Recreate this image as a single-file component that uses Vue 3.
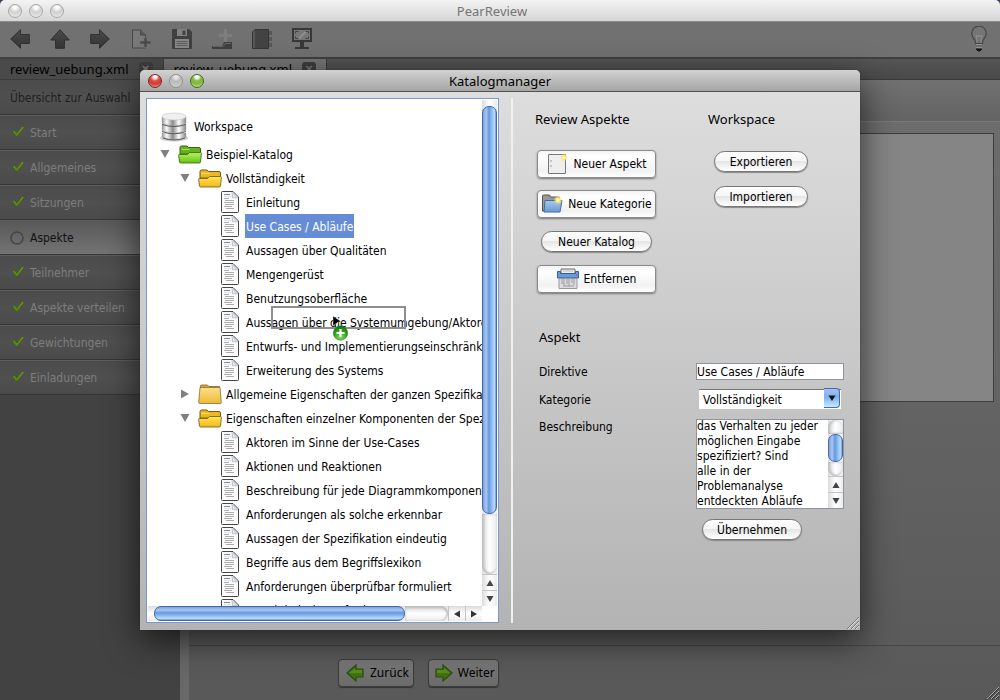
<script setup>
import { ref } from 'vue'

const steps = [
  { label: 'Start', done: true },
  { label: 'Allgemeines', done: true },
  { label: 'Sitzungen', done: true },
  { label: 'Aspekte', done: false },
  { label: 'Teilnehmer', done: true },
  { label: 'Aspekte verteilen', done: true },
  { label: 'Gewichtungen', done: true },
  { label: 'Einladungen', done: true }
]

const rows = [
  { kind: 'catalog', level: 1, open: true, label: 'Beispiel-Katalog' },
  { kind: 'folder', level: 2, open: true, label: 'Vollständigkeit' },
  { kind: 'doc', level: 3, label: 'Einleitung' },
  { kind: 'doc', level: 3, label: 'Use Cases / Abläufe', selected: true },
  { kind: 'doc', level: 3, label: 'Aussagen über Qualitäten' },
  { kind: 'doc', level: 3, label: 'Mengengerüst' },
  { kind: 'doc', level: 3, label: 'Benutzungsoberfläche' },
  { kind: 'doc', level: 3, label: 'Aussagen über die Systemumgebung/Aktoren' },
  { kind: 'doc', level: 3, label: 'Entwurfs- und Implementierungseinschränkungen' },
  { kind: 'doc', level: 3, label: 'Erweiterung des Systems' },
  { kind: 'closed', level: 2, open: false, label: 'Allgemeine Eigenschaften der ganzen Spezifikation' },
  { kind: 'folder', level: 2, open: true, label: 'Eigenschaften einzelner Komponenten der Spezifikation' },
  { kind: 'doc', level: 3, label: 'Aktoren im Sinne der Use-Cases' },
  { kind: 'doc', level: 3, label: 'Aktionen und Reaktionen' },
  { kind: 'doc', level: 3, label: 'Beschreibung für jede Diagrammkomponente' },
  { kind: 'doc', level: 3, label: 'Anforderungen als solche erkennbar' },
  { kind: 'doc', level: 3, label: 'Aussagen der Spezifikation eindeutig' },
  { kind: 'doc', level: 3, label: 'Begriffe aus dem Begriffslexikon' },
  { kind: 'doc', level: 3, label: 'Anforderungen überprüfbar formuliert' },
  { kind: 'doc', level: 3, label: 'Korrektheit der Anforderungen' }
]

const directive = ref('Use Cases / Abläufe')
const category = ref('Vollständigkeit')
const description = ref('das Verhalten zu jeder\nmöglichen Eingabe\nspezifiziert? Sind\nalle in der\nProblemanalyse\nentdeckten Abläufe')
</script>

<template>
  <div class="desktop">
    <svg class="defs" aria-hidden="true">
      <defs>
        <linearGradient id="gGreen" x1="0" y1="0" x2="0" y2="1"><stop offset="0" stop-color="#b9f06a" /><stop offset="1" stop-color="#63c40e" /></linearGradient>
        <linearGradient id="gYellow" x1="0" y1="0" x2="0" y2="1"><stop offset="0" stop-color="#ffe650" /><stop offset="1" stop-color="#f6b51e" /></linearGradient>
        <linearGradient id="gTan" x1="0" y1="0" x2="0" y2="1"><stop offset="0" stop-color="#fbe08a" /><stop offset="1" stop-color="#eeba38" /></linearGradient>
        <linearGradient id="gBlue" x1="0" y1="0" x2="0" y2="1"><stop offset="0" stop-color="#a9c8ea" /><stop offset="1" stop-color="#6b9ad2" /></linearGradient>
        <linearGradient id="gMetal" x1="0" y1="0" x2="1" y2="0"><stop offset="0" stop-color="#999" /><stop offset=".2" stop-color="#fafafa" /><stop offset=".45" stop-color="#8a8a8a" /><stop offset=".7" stop-color="#fff" /><stop offset="1" stop-color="#888" /></linearGradient>
        <linearGradient id="gDark" x1="0" y1="0" x2="0" y2="1"><stop offset="0" stop-color="#4a4a4a" /><stop offset="1" stop-color="#343434" /></linearGradient>
        <linearGradient id="gCheck" x1="0" y1="0" x2="0" y2="1"><stop offset="0" stop-color="#7ba51f" /><stop offset="1" stop-color="#4d7c10" /></linearGradient>
        <radialGradient id="gPlus" cx=".5" cy=".8" r=".8"><stop offset="0" stop-color="#7fe05c" /><stop offset=".6" stop-color="#2c9e1c" /><stop offset="1" stop-color="#156a10" /></radialGradient>
        <radialGradient id="gSun"><stop offset="0" stop-color="#fffef0" /><stop offset=".4" stop-color="#ffee70" /><stop offset="1" stop-color="#ffe650" stop-opacity="0" /></radialGradient>
      </defs>
    </svg>

    <main class="window">
      <header class="titlebar main-bar">
        <div class="lights"><button class="light" aria-label="Schließen"></button><button class="light" aria-label="Minimieren"></button><button class="light" aria-label="Zoomen"></button></div>
        <span class="title faded">PearReview</span>
      </header>

      <nav class="toolbar">
        <button aria-label="Zurück"><svg width="20" height="20" viewBox="0 0 20 20"><path d="M.7 10 10.500.7v4.800h8.800v9h-8.800v4.800z" fill="url(#gDark)" stroke="#303030" /></svg></button>
        <button aria-label="Nach oben"><svg width="20" height="20" viewBox="0 0 20 20"><path d="M10 .7 19.300 11h-4.800v8.300h-9V11H.7z" fill="url(#gDark)" stroke="#303030" /></svg></button>
        <button aria-label="Vor"><svg width="20" height="20" viewBox="0 0 20 20"><path d="M19.300 10 9.500.7v4.800H.7v9h8.800v4.800z" fill="url(#gDark)" stroke="#303030" /></svg></button>
        <button class="wide-tool" aria-label="Neue Datei"><svg width="20" height="20" viewBox="0 0 20 20"><path d="M1.500 1h8l5 5v13h-13z" fill="#797979" stroke="#484848" /><path d="M9.500 1v5h5" fill="#5a5a5a" stroke="#484848" /><path d="M13 8.500h3v3.500h4v3h-4v3.500h-3V15H9v-3h4z" fill="#4a4a4a" stroke="#777" stroke-width=".6" /></svg></button>
        <button aria-label="Speichern"><svg width="20" height="20" viewBox="0 0 20 20"><path d="M0 1q0-1 1-1h16l3 3v16q0 1-1 1H1q-1 0-1-1z" fill="#404040" /><path d="M5 0h10v7H5z" fill="#828282" /><path d="M10.500 1.500h3V6h-3z" fill="#444" /><path d="M3 10h14v9H3z" fill="#888" /><path d="M4.500 12.500h11m-11 2h11m-11 2h11" stroke="#5c5c5c" /></svg></button>
        <button aria-label="Hinzufügen"><svg width="20" height="20" viewBox="0 0 20 20"><path d="M12 0h3v5h5v3h-5v5h-3V8H7V5h5z" fill="#7e7e7e" /><path d="M0 17h10l2-4h8v7H0z" fill="#3f3f3f" /><path d="M1 17.500h10l2-3h6" fill="none" stroke="#666" /></svg></button>
        <button aria-label="Katalog"><svg width="20" height="20" viewBox="0 0 20 20"><path d="M3 .5h13.500v19H.5V3z" fill="#434343" stroke="#353535" /><path d="M1 3v16h2V1z" fill="#585858" /><path d="M17 2h3v4h-3zm0 6h3v4h-3zm0 6h3v4h-3z" fill="#575757" /></svg></button>
        <button aria-label="Präsentation"><svg width="20" height="22" viewBox="0 0 20 22"><path d="M0 0h20v14H0z" fill="#383838" /><path d="M2 2h16v10H2z" fill="#777" /><path d="m5 11 8-8h3l-8 8z" fill="#8e8e8e" /><path d="M3.500 5.500v-2h3m7 0h3v2m0 3v2h-3m-7 0h-3v-2" stroke="#444" fill="none" /><path d="M8 14h4v5h5v2H3v-2h5z" fill="#383838" /></svg></button>
        <button class="bulb" aria-label="Tipp"><svg width="16" height="26" viewBox="0 0 16 26"><path d="M4.500 17.500Q4.500 14 2.500 12A7.200 7.200 0 1 1 13.500 12q-2 2-2 5.500z" fill="#757575" stroke="#484848" stroke-width="1.300" /><path d="m6 17-1-8 2 2 1-2 1 2 2-2-1 8" fill="none" stroke="#8c8c8c" /><path d="M5 18h6v4H5z" fill="#929292" /><path d="M5 20h6" stroke="#444" /><path d="M5 23h6l-2 2H7z" fill="#161616" stroke="#161616" /></svg></button>
      </nav>

      <div class="tabs">
        <div class="tab"><a href="#a">review_uebung.xml</a><button class="close" aria-label="Tab schließen">×</button></div>
        <div class="tab current"><a href="#b">review_uebung.xml</a><button class="close" aria-label="Tab schließen">×</button></div>
      </div>

      <div class="workarea">
        <aside class="sidebar">
          <h2>Übersicht zur Auswahl</h2>
          <ul>
            <li v-for="s in steps" :key="s.label" :class="{ active: !s.done }">
              <svg v-if="s.done" width="14" height="18" viewBox="0 0 14 18"><path d="m2.500 7.500 2-1.200 2.300 2.800L12.500 2.500l1.500.8L7.500 12.500H6z" fill="url(#gCheck)" stroke="#3c5a12" stroke-width=".7" /></svg>
              <svg v-else width="14" height="14" viewBox="0 0 14 14"><circle cx="7" cy="7" r="6" fill="none" stroke="#464646" stroke-width="1.600" /></svg>
              <a href="#step">{{ s.label }}</a>
            </li>
          </ul>
        </aside>
        <section class="content">
          <div class="banner"></div>
          <div class="sheet"></div>
          <footer class="wizard">
            <button><svg width="18" height="18" viewBox="0 0 18 18"><path d="M1 9 10 1v4h7v8h-7v4z" fill="#42720f" stroke="#2b4e09" stroke-width="1.200" /><path d="m3 9 6-5v2h7v3z" fill="#5c8a20" /></svg>Zurück</button>
            <button><svg width="18" height="18" viewBox="0 0 18 18"><path d="M17 9 8 1v4H1v8h7v4z" fill="#42720f" stroke="#2b4e09" stroke-width="1.200" /><path d="M15 9 9 4v2H2v3z" fill="#5c8a20" /></svg>Weiter</button>
          </footer>
        </section>
      </div>
      <svg class="grip" width="12" height="12" viewBox="0 0 12 12"><path d="M0 12 12 0M4 12l8-8M8 12l4-4" stroke="#aaa" /><path d="M1 12 12 1M5 12l7-7M9 12l3-3" stroke="#333" /></svg>
    </main>

    <div class="overlay">
      <section class="dialog" role="dialog" aria-label="Katalogmanager">
        <header class="titlebar dialog-bar">
          <div class="lights"><button class="light red" aria-label="Schließen"></button><button class="light gray" aria-label="Minimieren"></button><button class="light green" aria-label="Zoomen"></button></div>
          <span class="title">Katalogmanager</span>
        </header>

        <div class="dialog-body">
          <div class="tree">
            <div class="view">
              <div class="root">
                <svg width="28" height="30" viewBox="0 0 28 30"><ellipse cx="14" cy="26" rx="14" ry="3.500" fill="#aaa" opacity=".6" /><g stroke="#999" stroke-width=".4"><path d="M2 21v4q12 5 24 0v-4z" fill="url(#gMetal)" /><path d="M2 13v5.500q12 5 24 0V13z" fill="url(#gMetal)" /><path d="M2 5v6.500q12 4.500 24 0V5z" fill="url(#gMetal)" /></g><path d="M2 12.300q12 4.500 24 0M2 19.500q12 4.500 24 0M3 26q11 4 22 0" stroke="#5c5c5c" stroke-width="1" fill="none" /><ellipse cx="14" cy="4.500" rx="12" ry="3.500" fill="#efefef" stroke="#c4c4c4" stroke-width=".6" /></svg>
                <span>Workspace</span>
              </div>
              <ul>
                <li v-for="r in rows" :key="r.label" :class="'l' + r.level">
                  <button v-if="r.kind !== 'doc'" class="twist" :aria-label="r.label">
                    <svg width="10" height="10" viewBox="0 0 10 10"><path :d="r.open ? 'M.5 1h9L5 9z' : 'M1 .5v9L9 5z'" fill="#808080" /></svg>
                  </button>
                  <svg v-if="r.kind === 'catalog' || r.kind === 'folder'" class="icon" width="24" height="19" viewBox="0 0 24 19" :stroke="r.kind === 'catalog' ? '#3f5f16' : '#705818'">
                    <path d="M2 16V2.500Q2 1 3.500 1H9l1.500 1.500H21q1.500 0 1.500 1.500v5H2z" :fill="r.kind === 'catalog' ? '#62b41a' : '#f0b820'" />
                    <path d="M.6 10.500Q.5 9.500 1.500 9.500h8l2-2H22.500q1 0 .9 1L22.500 17q-.2 1-1.200 1H2.700q-1 0-1.200-1z" :fill="r.kind === 'catalog' ? 'url(#gGreen)' : 'url(#gYellow)'" stroke-width=".8" />
                    <path d="M3.500 4.500h8M12.500 8.700h9.500" :stroke="r.kind === 'catalog' ? '#a8e25e' : '#ffe36a'" />
                  </svg>
                  <svg v-else-if="r.kind === 'closed'" class="icon" width="24" height="20" viewBox="0 0 24 20"><path d="M2.500 17V2Q2.500 1 3.500 1h6L11 2.500h10.500v14" fill="#dba82c" stroke="#80632a" stroke-width=".8" /><path d="M2 3.500H22L23.300 18.500q0 1-1 1H1.700q-1 0-1-1z" fill="url(#gTan)" stroke="#8a6c30" stroke-width=".8" /></svg>
                  <svg v-else class="doc" width="18" height="22" viewBox="0 0 18 22">
                    <path d="M1.500.5H12L17.500 6v14.500q0 1-1 1h-15q-1 0-1-1v-19q0-1 1-1z" fill="#fbfbfb" stroke="#444" />
                    <path d="M11 1.500 16.500 7 11.500 6.500z" fill="#dfe7f3" stroke="#9aa6b8" stroke-width=".6" />
                    <path d="M3 3.500h6" stroke="#7f8a99" /><path d="M3 5.500h7" stroke="#dbe3ee" /><path d="M3 7.500h5M4 9.500h9M3 11.500h10M4 13.500h9M3 15.500h8M5 17.500h8" stroke="#adadad" />
                  </svg>
                  <span :class="{ selected: r.selected }">{{ r.label }}</span>
                </li>
              </ul>
              <div class="dragbox"></div>
              <svg class="pointer" width="18" height="28" viewBox="0 0 18 28"><path d="M1 0 9 5.500 5.500 6.500 1 10z" fill="#000" stroke="#fff" stroke-width=".4" /><circle cx="8.500" cy="17" r="7.200" fill="url(#gPlus)" stroke="#277d1c" stroke-width=".6" /><path d="M8.500 13v8m-4-4h8" stroke="#fff" stroke-width="2.200" /></svg>
            </div>
            <div class="vbar">
              <div class="thumb"></div><div class="track"></div>
              <button aria-label="Nach oben"><svg width="8" height="8"><path d="M4 1 7.500 7h-7z" fill="#444" /></svg></button>
              <button aria-label="Nach unten"><svg width="8" height="8"><path d="M4 7 7.500 1h-7z" fill="#444" /></svg></button>
            </div>
            <div class="hbar">
              <div class="thumb"></div><div class="track"></div>
              <button aria-label="Nach links"><svg width="8" height="8"><path d="M1 4 7 .5v7z" fill="#333" /></svg></button>
              <button aria-label="Nach rechts"><svg width="8" height="8"><path d="M7 4 1 .5v7z" fill="#333" /></svg></button>
            </div>
          </div>

          <div class="panel">
            <div class="actions">
              <div class="col first">
                <h3>Review Aspekte</h3>
                <button class="square"><svg width="22" height="22" viewBox="0 0 22 22"><path d="M2.500 1.500h17v19h-17z" fill="#eee" stroke="#777" /><path d="M5 7v2m0 3v2" stroke="#999" /><circle cx="18" cy="4.500" r="4" fill="url(#gSun)" /></svg>Neuer Aspekt</button>
                <button class="square"><svg width="22" height="20" viewBox="0 0 22 20"><path d="M1.500 17V2q0-1 1-1h6l1 2h8q1 0 1 1v13z" fill="#999" stroke="#555" /><path d="M4 6.500h17l-2 11.500H3z" fill="url(#gBlue)" stroke="#416da5" /><circle cx="17" cy="6" r="4.500" fill="url(#gSun)" /></svg>Neue Kategorie</button>
                <button class="pill wide">Neuer Katalog</button>
                <button class="square"><svg width="22" height="22" viewBox="0 0 22 22"><path d="M4 1h14v5H4z" fill="#eee" stroke="#666" /><path d="M6 3h10" stroke="#bbb" /><path d="M.5 3.500h3v2h15v-2h3V10H.5z" fill="#6d9bd6" stroke="#2f5fa6" /><path d="M2 10.500h18v10H2z" fill="#ddd" stroke="#999" /><path d="M5 11v5m2-5v7m3-7v5m2-5v7m3-7v4m2-4v6M6 18h11" stroke="#999" /><path d="M19 7h1" stroke="#d22" /></svg>Entfernen</button>
              </div>
              <div class="col">
                <h3>Workspace</h3>
                <button class="pill">Exportieren</button>
                <button class="pill">Importieren</button>
              </div>
            </div>

            <form class="form" @submit.prevent>
              <h3>Aspekt</h3>
              <label for="dir">Direktive</label>
              <input id="dir" v-model="directive" type="text">
              <label for="kat">Kategorie</label>
              <div class="combo">
                <select id="kat" v-model="category"><option>Vollständigkeit</option><option>Allgemeine Eigenschaften</option></select>
                <span class="drop"><svg width="8" height="8"><path d="M.5 1.500h7L4 7z" fill="#111" /></svg></span>
              </div>
              <label for="desc">Beschreibung</label>
              <div class="area">
                <textarea id="desc" v-model="description"></textarea>
                <div class="vbar small">
                  <div class="track top"></div><div class="thumb"></div><div class="track"></div>
                  <button type="button" aria-label="Nach oben"><svg width="8" height="8"><path d="M4 1 7.500 7h-7z" fill="#444" /></svg></button>
                  <button type="button" aria-label="Nach unten"><svg width="8" height="8"><path d="M4 7 7.500 1h-7z" fill="#444" /></svg></button>
                </div>
              </div>
              <button class="pill submit">Übernehmen</button>
            </form>
          </div>
        </div>
        <svg class="grip" width="12" height="12" viewBox="0 0 12 12"><path d="M0 12 12 0M4 12l8-8M8 12l4-4" stroke="#777" /><path d="M1 12 12 1M5 12l7-7M9 12l3-3" stroke="#ddd" /></svg>
      </section>
    </div>
  </div>
</template>

<style>
body { background: #29435f; }
</style>

<style scoped>
* { box-sizing: border-box; }
.desktop { position: relative; font: 12px/16px "DejaVu Sans Condensed", "Noto Sans", sans-serif; color: #000; }
.defs { position: absolute; width: 0; height: 0; }
button, input, select, textarea { font: inherit; color: inherit; padding: 0; margin: 0; border: 0; background: none; }
h2, h3, ul { margin: 0; padding: 0; font-weight: normal; list-style: none; }
a { color: inherit; text-decoration: none; }

.window { position: relative; min-height: 100vh; display: flex; flex-direction: column; background: #5c5c5c; border-radius: 5px 5px 0 0; overflow: hidden; }
.titlebar { height: 22px; display: grid; grid-template-columns: 1fr auto 1fr; align-items: center; padding: 0 8px; background: linear-gradient(#f3f3f3, #d6d6d6); border-bottom: 1px solid #8b8b8b; }
.main-bar { padding-right: 24px; }
.title { font: 13px/18px "Noto Sans", sans-serif; grid-column: 2; }
.faded { color: #757575; }
.lights { display: flex; gap: 7px; }
.light { width: 14px; height: 14px; border-radius: 50%; border: 1px solid #a5a5a5; background: radial-gradient(circle at 50% 20%, #fff 0 10%, #d0d0d0 45%, #f2f2f2 100%); }
.red { border-color: #7c2723; background: radial-gradient(circle at 50% 15%, #fff 0 12%, #e25247 35%, #d13a31 60%, #ffaaa2 100%); }
.gray { border-color: #8e8e8e; background: radial-gradient(circle at 50% 15%, #e8e8e8 0 12%, #b9b9b9 40%, #d5d5d5 100%); }
.green { border-color: #3f6a1e; background: radial-gradient(circle at 50% 15%, #fff 0 12%, #87bd4b 35%, #7fb83d 60%, #dcf7a0 100%); }

.toolbar { height: 37px; display: flex; align-items: center; gap: 20px; padding: 0 13px 2px 10px; background: #717171; border-bottom: 2px solid #404040; }
.toolbar button { display: flex; width: 20px; justify-content: center; }
.toolbar .wide-tool { width: 22px; }
.toolbar .bulb { width: 16px; margin-left: auto; }
.tabs { height: 21px; display: flex; background: linear-gradient(#555, #494949); border-bottom: 1px solid #3b3b3b; }
.tab { display: flex; align-items: center; gap: 10px; padding: 0 10px; border-right: 1px solid #3b3b3b; font: 13px/18px "Noto Sans", sans-serif; background: #4a4a4a; }
.current { background: #757575; }
.close { width: 14px; height: 14px; border-radius: 3px; background: #3e3e3e; color: #777; font: bold 13px/12px "Liberation Sans", sans-serif; }

.workarea { flex: 1; display: flex; }
.sidebar { width: 189px; flex: none; background: #424242; border-right: 9px solid #686868; color: #7d7d7d; }
.sidebar h2, .sidebar li { height: 35px; display: flex; align-items: center; gap: 6px; padding: 0 10px; font-size: 12px; background: linear-gradient(#4b4b4b, #505050 50%, #4a4a4a); border-bottom: 1px solid #363636; border-top: 1px solid #5d5d5d; }
.sidebar h2 { color: #202020; border-top: 0; padding-top: 2px; }
.sidebar li svg { flex: none; }
.sidebar .active { color: #111; background: linear-gradient(#585858, #747474); }
.content { flex: 1; display: flex; flex-direction: column; background: linear-gradient(#6e6e6e, #595959); }
.banner { height: 42px; background: linear-gradient(#717171, #636363); border-bottom: 1px solid #7b7b7b; }
.sheet { height: 269px; margin: 11px 6px 0 8px; background: #858585; border: 1px solid #3d3d3d; }
.wizard { margin-top: auto; height: 55px; padding: 13px 0 0 149px; display: flex; align-items: flex-start; gap: 14px; border-top: 1px solid #474747; }
.wizard button { height: 28px; display: flex; align-items: center; gap: 6px; padding: 0 4px 0 7px; border-radius: 4px; border: 1px solid #3d3d3d; background: linear-gradient(#797979, #6b6b6b); font: 12px/16px "Noto Sans", sans-serif; box-shadow: 0 1px 1px #333; }
.wizard button + button { gap: 5px; padding: 0 3px 0 6px; }
.grip { position: absolute; right: 1px; bottom: 1px; }

.overlay { position: absolute; inset: 0; display: flex; align-items: center; justify-content: center; }
.dialog { position: relative; width: 72%; min-height: 560px; display: flex; flex-direction: column; background: linear-gradient(#dfdfdf, #b3b3b3); border-radius: 5px 5px 0 0; box-shadow: 0 0 1px #222, 0 10px 34px rgba(0, 0, 0, .65); }
.dialog-bar { background: linear-gradient(#d2d2d2, #a5a5a5); border-bottom: 1px solid #505050; border-radius: 5px 5px 0 0; }
.dialog-body { flex: 1; display: flex; padding: 6px 0 7px 6px; }
.tree { width: 353px; height: 525px; flex: none; display: grid; grid-template-columns: 1fr 15px; grid-template-rows: 1fr 15px; padding: 1px; background: #fff; border: 1px solid #789acb; }
.view { position: relative; overflow: hidden; padding: 12px 0 0 12px; }
.root { height: 30px; display: flex; align-items: center; gap: 6px; white-space: nowrap; }
.view li { height: 24px; display: flex; align-items: center; white-space: nowrap; }
.view svg { flex: none; }
.l2 { padding-left: 20px; }
.l3 { padding-left: 61px; }
.twist { width: 10px; height: 10px; display: flex; margin-right: 8px; }
.view li span { padding-top: 2px; }
.l1 span, .l2 span { padding-left: 4px; }
.view .l3 span { padding: 5px 1px 3px 1px; margin-left: 6px; }
.l3 .selected { background: #668cd8; color: #fff; }
.dragbox { position: absolute; left: 123px; top: 206px; width: 135px; height: 23px; border: 2px solid #8e8e8e; }
.pointer { position: absolute; left: 184px; top: 216px; }

.vbar { display: flex; flex-direction: column; background: linear-gradient(90deg, #dcdcdc, #fff 50%, #ececec); padding-top: 6px; }
.thumb { border: 1px solid #4467ad; border-radius: 7px; }
.vbar .thumb { height: 408px; background: linear-gradient(90deg, #7fa3d8, #a9c6ee 25%, #6497e2 45%, #94c0f3 70%, #b8dbf8 88%, #6f94d0); }
.track { flex: 1; border-radius: 0 0 8px 8px; }
.vbar .track { box-shadow: inset 2px 0 3px #bbb, inset 0 -1px 2px #ccc; }
.vbar button { height: 16px; display: grid; place-items: center; border-top: 1px solid #c4c4c4; }
.hbar { display: flex; background: linear-gradient(#dcdcdc, #fff 50%, #ececec); padding-left: 6px; }
.hbar .thumb { width: 251px; background: linear-gradient(#7fa3d8, #a9c6ee 25%, #6497e2 45%, #94c0f3 70%, #b8dbf8 88%, #6f94d0); }
.hbar .track { border-radius: 0 8px 8px 0; box-shadow: inset 0 2px 3px #bbb, inset -1px 0 2px #bbb; }
.hbar button { width: 17px; display: grid; place-items: center; border-left: 1px solid #c4c4c4; }

.panel { flex: 1; margin-left: 12px; border-left: 2px solid #f0f0f0; padding: 11px 16px 0 22px; }
h3 { font: 13px/20px "Noto Sans", sans-serif; }
.actions { display: flex; gap: 52px; height: 206px; }
.col { display: flex; flex-direction: column; align-items: flex-end; }
.first { width: 121px; }
.col h3 { align-self: flex-start; margin-bottom: 22px; }
.first h3 { margin-bottom: 21px; }
.col .square { margin-bottom: 12px; width: 119px; height: 28px; }
.square, .pill { display: flex; align-items: center; justify-content: center; gap: 6px; border: 1px solid #777; white-space: nowrap; }
.square { gap: 5px; border-radius: 4px; background: linear-gradient(#f3f3f3, #fff 20%, #f2f2f2 75%, #fff); box-shadow: 0 1px 2px #777; border-color: #8a8a8a; }
.pill { height: 21px; border-radius: 11px; width: 94px; background: linear-gradient(#fdfdfd, #f6f6f6 45%, #e6e6e6 50%, #fff); box-shadow: 0 1px 1px #888; margin: 0 0 14px 6px; }
.wide { width: 111px; margin: 1px 4px 13px 0; }
.form { display: grid; grid-template-columns: 1fr 148px; padding: 12px 0 0 4px; align-items: start; }
.form h3 { grid-column: 1 / 3; margin-bottom: 16px; }
.form label { line-height: 18px; }
.form input { height: 17px; border: 1px solid #8e949f; background: #fff; margin-bottom: 8px; }
.combo { position: relative; margin: 0 3px 10px 3px; height: 21px; }
.combo select { appearance: none; width: 100%; height: 20px; margin-top: 1px; padding-left: 4px; background: #fff; border-top: 1px solid #777; }
.form label[for="kat"] { line-height: 24px; }
.form label[for="desc"] { line-height: 16px; }
.drop { position: absolute; right: 1px; top: 0; width: 16px; height: 20px; display: grid; place-items: center; border: 1px solid #4467ad; border-left: 0; border-radius: 0 4px 4px 0; background: linear-gradient(#a3c2f2, #7db0f3 45%, #c5ecff); pointer-events: none; }
.area { display: flex; height: 90px; border: 1px solid #8e949f; background: #fff; overflow: hidden; }
.area textarea { flex: 1; min-width: 0; resize: none; overflow: hidden; white-space: pre; line-height: 15px; height: 91px; margin-top: -1px; outline: 0; }
.small { width: 15px; padding: 0; }
.small .thumb { height: 28px; }
.small .top { flex: 0 0 14px; border-radius: 8px 8px 0 0; }
.submit { grid-column: 2; margin: 10px 0 0 6px; width: 100px; }
</style>
